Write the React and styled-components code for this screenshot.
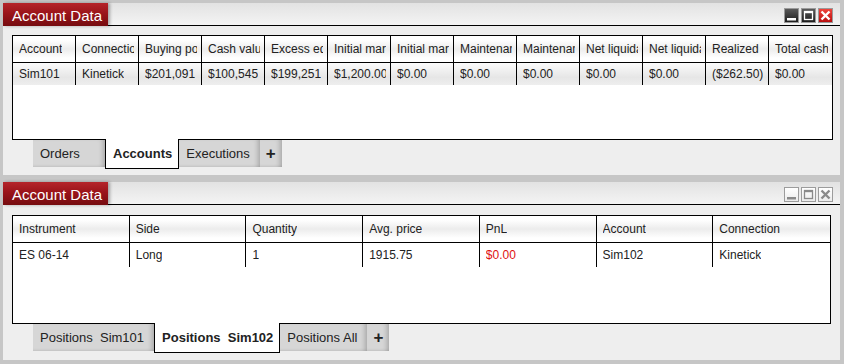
import React from "react";
import styled, { createGlobalStyle, css } from "styled-components";

const GlobalStyle = createGlobalStyle`
  html, body {
    margin: 0;
    padding: 0;
    background: #c6c6c6;
    font-family: "Liberation Sans", Arial, sans-serif;
  }
`;

const Page = styled.div`
  width: 844px;
  height: 364px;
  box-sizing: border-box;
  padding: 3px 4px 4px 3px;
  display: flex;
  flex-direction: column;
  gap: 7px;
`;

const Window = styled.div`
  background: #eeeeee;
  display: flex;
  flex-direction: column;
  height: ${(p) => p.height}px;
`;

const TitleBar = styled.div`
  display: flex;
  height: 23px;
  flex: none;
`;

const TitleTab = styled.div`
  width: 105px;
  box-sizing: border-box;
  padding: 1px 0 0 9px;
  display: flex;
  align-items: center;
  color: #fff;
  font-size: 15px;
  background: linear-gradient(#b5242a 0%, #9a141a 45%, #760c10 100%);
  box-shadow: 2px 0 3px rgba(0, 0, 0, 0.3);
  position: relative;
  z-index: 1;
`;

const TitleFill = styled.div`
  flex: 1;
  display: flex;
  justify-content: flex-end;
  align-items: flex-end;
  gap: 2px;
  padding: 0 7px 2px 0;
  border-bottom: 1px solid #000;
  background: linear-gradient(#e2e2e2, #f4f4f4);
`;

const WinButton = styled.div`
  width: 15px;
  height: 15px;
  box-sizing: border-box;
  display: flex;
  align-items: center;
  justify-content: center;
  ${(p) =>
    p.active
      ? css`
          border: 1px solid #9a9a9a;
          background: ${p.close
            ? "linear-gradient(#f0443c, #b80f0f)"
            : "linear-gradient(#5a5a5a, #1e1e1e)"};
          color: #fff;
        `
      : css`
          border: 1px solid #9c9c9c;
          background: linear-gradient(#ffffff, #ececec);
          color: #8a8a8a;
        `}
`;

const TableBox = styled.div`
  margin: ${(p) => p.top}px ${(p) => p.right}px 0 9px;
  height: ${(p) => p.height}px;
  flex: none;
  border: 1px solid #000;
  background: #fff;
  display: flex;
  flex-direction: column;
`;

const Row = styled.div`
  display: grid;
  grid-template-columns: repeat(${(p) => p.cols}, 1fr);
  height: ${(p) => p.height}px;
  ${(p) =>
    p.header
      ? css`
          border-bottom: 1px solid #000;
          background: linear-gradient(#fff 15%, #ececec 50%, #fff 85%);
        `
      : p.shaded
      ? css`
          background: linear-gradient(#fbfbfb 0%, #e6e6e6 65%, #eeeeee 100%);
        `
      : css`
          background: #fff;
        `}
`;

const Cell = styled.div`
  padding: 0 4px 0 6px;
  min-width: 0;
  display: flex;
  align-items: center;
  font-size: 12px;
  color: ${(p) => (p.red ? "#e01010" : "#222")};
  border-right: 1px solid #000;
  &:last-child {
    border-right: none;
  }
`;

const CellText = styled.span`
  display: block;
  overflow: hidden;
  white-space: nowrap;
`;

const TabStrip = styled.div`
  display: flex;
  margin: -1px 0 0 30px;
  height: 30px;
  align-items: flex-start;
`;

const Tab = styled.div`
  box-sizing: border-box;
  white-space: pre;
  font-size: 13px;
  color: #222;
  display: flex;
  align-items: center;
  ${(p) =>
    p.active
      ? css`
          height: 30px;
          padding: 0 6px 0 7px;
          background: #fff;
          border: 1px solid #000;
          border-top: none;
          font-weight: bold;
          position: relative;
          z-index: 1;
        `
      : css`
          height: 27px;
          margin-top: 1px;
          min-width: ${p.plus ? 0 : 72}px;
          padding: 0 ${p.plus ? 6 : 10}px 0 ${p.plus ? 6 : 7}px;
          background: #d6d6d6;
          box-shadow: inset -5px 0 5px -3px rgba(0, 0, 0, 0.22),
            inset 0 -3px 3px -2px rgba(0, 0, 0, 0.08);
          font-weight: ${p.plus ? "bold" : "normal"};
          font-size: ${p.plus ? 17 : 13}px;
        `}
`;

const MinIcon = () => (
  <svg width="11" height="11" viewBox="0 0 11 11">
    <rect x="1" y="8" width="9" height="2.5" fill="currentColor" />
  </svg>
);

const MaxIcon = () => (
  <svg width="11" height="11" viewBox="0 0 11 11">
    <rect x="1.5" y="1.5" width="8" height="8" fill="none" stroke="currentColor" strokeWidth="1.3" />
    <rect x="1" y="1" width="9" height="2.2" fill="currentColor" />
  </svg>
);

const CloseIcon = () => (
  <svg width="11" height="11" viewBox="0 0 11 11">
    <path d="M1.5 1.5 L9.5 9.5 M9.5 1.5 L1.5 9.5" stroke="currentColor" strokeWidth="2.4" />
  </svg>
);

const accountsCols = [
  "Account",
  "Connection",
  "Buying power",
  "Cash value",
  "Excess equity",
  "Initial margin",
  "Initial margin",
  "Maintenance",
  "Maintenance",
  "Net liquidation",
  "Net liquidation",
  "Realized",
  "Total cash",
];
const accountsRow = [
  "Sim101",
  "Kinetick",
  "$201,091",
  "$100,545",
  "$199,251",
  "$1,200.00",
  "$0.00",
  "$0.00",
  "$0.00",
  "$0.00",
  "$0.00",
  "($262.50)",
  "$0.00",
];

const posCols = ["Instrument", "Side", "Quantity", "Avg. price", "PnL", "Account", "Connection"];
const posRow = ["ES 06-14", "Long", "1", "1915.75", "$0.00", "Sim102", "Kinetick"];

const DataWindow = ({ active, height, tableTop, tableRight, tableHeight, cols, row, shaded, rowHeight, tabs, activeTab }) => (
  <Window height={height}>
    <TitleBar>
      <TitleTab>Account Data</TitleTab>
      <TitleFill>
        <WinButton active={active}>
          <MinIcon />
        </WinButton>
        <WinButton active={active}>
          <MaxIcon />
        </WinButton>
        <WinButton active={active} close>
          <CloseIcon />
        </WinButton>
      </TitleFill>
    </TitleBar>
    <TableBox top={tableTop} right={tableRight} height={tableHeight}>
      <Row header cols={cols.length} height={26}>
        {cols.map((c, i) => (
          <Cell key={i}>
            <CellText>{c}</CellText>
          </Cell>
        ))}
      </Row>
      <Row cols={cols.length} height={rowHeight} shaded={shaded}>
        {row.map((c, i) => (
          <Cell key={i} red={cols[i] === "PnL"}>
            <CellText>{c}</CellText>
          </Cell>
        ))}
      </Row>
    </TableBox>
    <TabStrip>
      {tabs.map((t) => (
        <Tab key={t} active={t === activeTab}>
          {t}
        </Tab>
      ))}
      <Tab plus>+</Tab>
    </TabStrip>
  </Window>
);

export default function App() {
  return (
    <>
      <GlobalStyle />
      <Page>
        <DataWindow
          active
          height={172}
          tableTop={9}
          tableRight={7}
          tableHeight={103}
          cols={accountsCols}
          row={accountsRow}
          shaded
          rowHeight={22}
          tabs={["Orders", "Accounts", "Executions"]}
          activeTab="Accounts"
        />
        <DataWindow
          height={178}
          tableTop={10}
          tableRight={9}
          tableHeight={107}
          cols={posCols}
          row={posRow}
          rowHeight={24}
          tabs={["Positions  Sim101", "Positions  Sim102", "Positions All"]}
          activeTab="Positions  Sim102"
        />
      </Page>
    </>
  );
}
